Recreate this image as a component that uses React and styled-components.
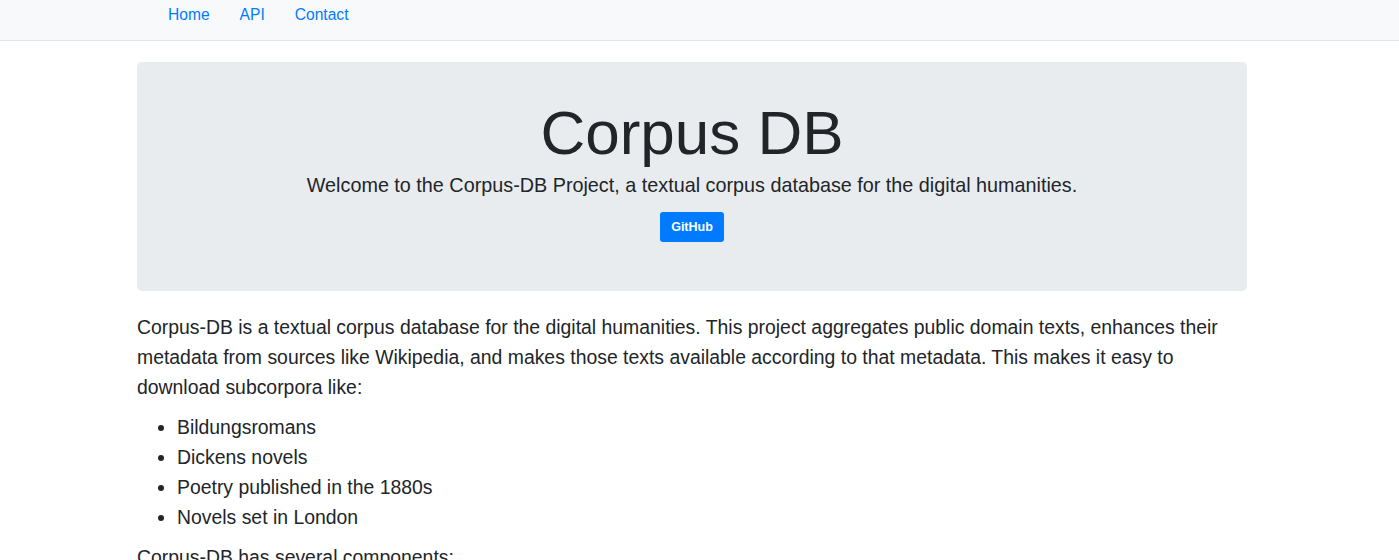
import styled, { createGlobalStyle } from 'styled-components';

const GlobalStyle = createGlobalStyle`
  body {
    margin: 0;
    background: #fff;
    color: #212529;
    font-family: 'Liberation Sans', Arial, sans-serif;
  }
`;

const links = ['Home', 'API', 'Contact'];
const subcorpora = [
  'Bildungsromans',
  'Dickens novels',
  'Poetry published in the 1880s',
  'Novels set in London',
];

const App = () => {
  return (
    <>
      <GlobalStyle />
      <Navbar>
        <NavInner>
          {links.map((l) => (
            <NavLink key={l} href="#">
              {l}
            </NavLink>
          ))}
        </NavInner>
      </Navbar>
      <Page>
        <Container>
          <Jumbotron>
            <Title>Corpus DB</Title>
            <Lead>
              Welcome to the Corpus-DB Project, a textual corpus database for
              the digital humanities.
            </Lead>
            <GitHubButton href="#">GitHub</GitHubButton>
          </Jumbotron>
          <Paragraph>
            Corpus-DB is a textual corpus database for the digital humanities.
            This project aggregates public domain texts, enhances their
            metadata from sources like Wikipedia, and makes those texts
            available according to that metadata. This makes it easy to
            download subcorpora like:
          </Paragraph>
          <List>
            {subcorpora.map((s) => (
              <li key={s}>{s}</li>
            ))}
          </List>
          <Paragraph>Corpus-DB has several components:</Paragraph>
        </Container>
      </Page>
    </>
  );
};

export default App;

// the reference page had a 15px scrollbar, so content centres in 1384px
const Navbar = styled.nav`
  height: 41px;
  box-sizing: border-box;
  background: #f8f9fa;
  border-bottom: 1px solid #e5e5e5;
  padding-right: 15px;
`;
const NavInner = styled.div`
  width: 1110px;
  margin: 0 auto;
  padding: 3px 15px 0;
  box-sizing: border-box;
  display: flex;
`;
const NavLink = styled.a`
  color: #007bff;
  text-decoration: none;
  font-size: 15.6px;
  line-height: 24px;
  padding: 0 15px;
  &:first-child {
    padding-left: 16px;
  }
`;
const Page = styled.div`
  padding-right: 15px;
`;
const Container = styled.div`
  width: 1110px;
  margin: 0 auto;
  padding-top: 21px;
`;
const Jumbotron = styled.div`
  background: #e9ecef;
  border-radius: 5px;
  height: 229px;
  box-sizing: border-box;
  padding-top: 34px;
  display: flex;
  flex-direction: column;
  align-items: center;
  margin-bottom: 21px;
`;
const Title = styled.h1`
  margin: 0;
  font-size: 62px;
  font-weight: 400;
  line-height: 74px;
  color: #212529;
`;
const Lead = styled.p`
  margin: 0 0 12px;
  font-size: 19.8px;
  line-height: 30px;
  font-weight: 300;
`;
const GitHubButton = styled.a`
  display: inline-block;
  background: #007bff;
  color: #fff;
  font-size: 12.5px;
  font-weight: 700;
  line-height: 18px;
  padding: 6px 11px;
  border-radius: 3px;
  text-decoration: none;
`;
const Paragraph = styled.p`
  margin: 0 0 10px;
  font-size: 19.4px;
  line-height: 30px;
`;
const List = styled.ul`
  margin: 0 0 10px;
  padding-left: 40px;
  font-size: 19.4px;
  line-height: 30px;
`;
